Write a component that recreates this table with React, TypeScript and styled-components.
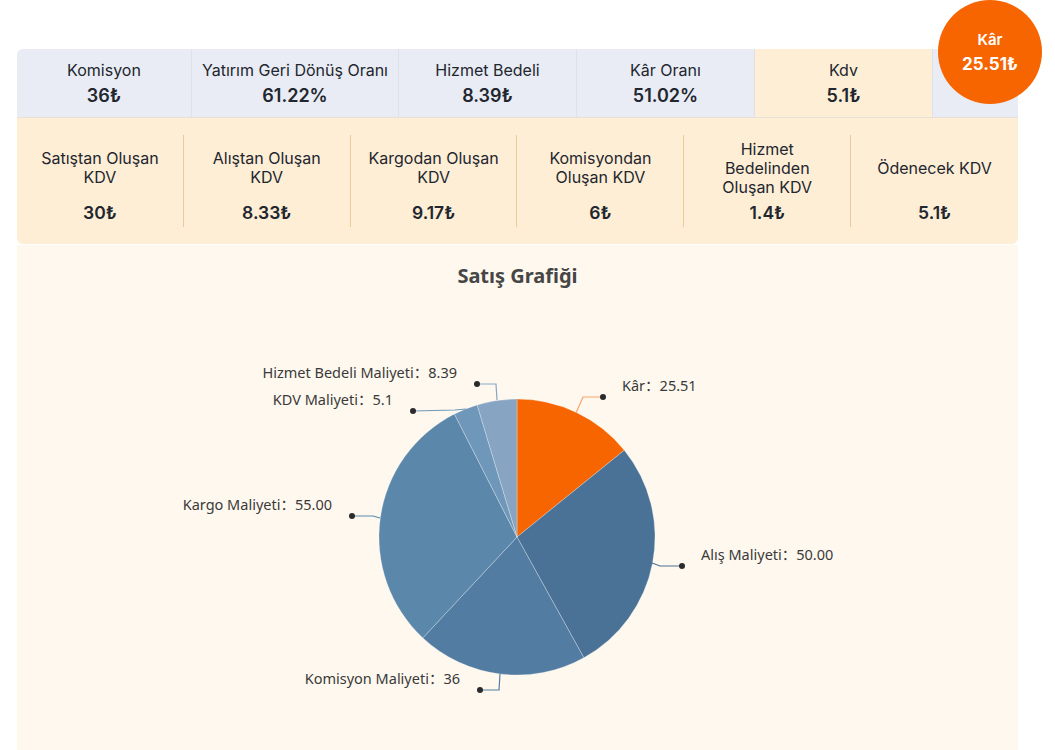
import React from 'react';
import styled, { createGlobalStyle } from 'styled-components';

const GlobalStyle = createGlobalStyle`
  html, body {
    margin: 0;
    padding: 0;
    background: #ffffff;
    font-family: Inter, "Noto Sans", sans-serif;
    color: #1f2430;
  }
`;

const Page = styled.div`
  position: relative;
  width: 1001px;
  padding: 49px 0 0 17px;
`;

const SummaryRow = styled.div`
  display: grid;
  grid-template-columns: 175px 207px 178px 178px 178px 85px;
  height: 68px;
  background: #e9ecf4;
  border-radius: 6px 6px 0 0;
  border-bottom: 1px solid #e6e2da;
  overflow: hidden;
`;

const SummaryCell = styled.div<{ $highlight?: boolean }>`
  display: flex;
  flex-direction: column;
  align-items: center;
  justify-content: center;
  gap: 5px;
  background: ${(p) => (p.$highlight ? '#ffeed6' : 'transparent')};
  border-right: 1px solid #dde1e8;
  &:last-child {
    border-right: none;
  }
`;

const SummaryLabel = styled.span`
  font-size: 16px;
  line-height: 19px;
  color: #22262e;
`;

const SummaryValue = styled.span`
  font-size: 18px;
  line-height: 21px;
  font-weight: 600;
  color: #22262e;
`;

const KdvRow = styled.div`
  display: grid;
  grid-template-columns: repeat(6, 1fr);
  background: #ffeed6;
  padding: 17px 0 17px;
  border-radius: 0 0 6px 6px;
`;

const KdvCell = styled.div`
  display: flex;
  flex-direction: column;
  align-items: center;
  height: 92px;
  padding: 0 17px;
  border-right: 1px solid #eccb98;
  &:last-child {
    border-right: none;
  }
`;

const KdvLabel = styled.div`
  display: flex;
  align-items: center;
  justify-content: center;
  height: 66px;
  font-size: 16px;
  line-height: 19px;
  text-align: center;
  color: #22262e;
`;

const KdvValue = styled.div`
  margin-top: 1px;
  font-size: 17.5px;
  font-weight: 600;
  color: #22262e;
`;

const ChartPanel = styled.div`
  margin-top: 1px;
  height: 520px;
  background: #fff8ee;
  display: flex;
  flex-direction: column;
  align-items: center;
`;

const ChartTitle = styled.h2`
  margin: 19px 0 0;
  height: 24px;
  font-family: "Noto Sans", "Open Sans", sans-serif;
  font-size: 20px;
  line-height: 24px;
  font-weight: 700;
  color: #464646;
`;

const Badge = styled.div`
  position: absolute;
  left: 938px;
  top: 0;
  width: 104px;
  height: 104px;
  border-radius: 50%;
  background: #f76500;
  color: #ffffff;
  display: flex;
  flex-direction: column;
  align-items: center;
  justify-content: center;
  gap: 5px;
`;

const BadgeLabel = styled.span`
  font-size: 15px;
  font-weight: 600;
  line-height: 18px;
`;

const BadgeValue = styled.span`
  font-size: 17px;
  font-weight: 700;
  line-height: 20px;
`;

const summary = [
  { label: 'Komisyon', value: '36₺' },
  { label: 'Yatırım Geri Dönüş Oranı', value: '61.22%' },
  { label: 'Hizmet Bedeli', value: '8.39₺' },
  { label: 'Kâr Oranı', value: '51.02%' },
  { label: 'Kdv', value: '5.1₺', highlight: true },
];

const kdvItems = [
  { label: 'Satıştan Oluşan KDV', value: '30₺' },
  { label: 'Alıştan Oluşan KDV', value: '8.33₺' },
  { label: 'Kargodan Oluşan KDV', value: '9.17₺' },
  { label: 'Komisyondan Oluşan KDV', value: '6₺' },
  { label: 'Hizmet Bedelinden Oluşan KDV', value: '1.4₺' },
  { label: 'Ödenecek KDV', value: '5.1₺' },
];

// page coords of the chart svg's top-left corner
const OX = 17;
const OY = 288;
const CX = 517 - OX;
const CY = 537 - OY;
const R = 138;

type Slice = {
  name: string;
  value: number;
  color: string;
  line: string;
  points: [number, number][];
  side: 'left' | 'right';
};

const slices: Slice[] = [
  { name: 'Kâr', value: 25.51, color: '#f76500', line: '#f7a46c', side: 'right', points: [[576, 413], [583, 397], [603, 397]] },
  { name: 'Alış Maliyeti', value: 50, color: '#4a7196', line: '#4a7196', side: 'right', points: [[652, 563], [660, 566], [682, 566]] },
  { name: 'Komisyon Maliyeti', value: 36, color: '#527ca1', line: '#527ca1', side: 'left', points: [[500, 674], [499, 690], [480, 690]] },
  { name: 'Kargo Maliyeti', value: 55, color: '#5b87ab', line: '#5b87ab', side: 'left', points: [[380, 518], [373, 516], [352, 516]] },
  { name: 'KDV Maliyeti', value: 5.1, color: '#6f97b9', line: '#6f97b9', side: 'left', points: [[466, 409], [455, 410], [413, 411]] },
  { name: 'Hizmet Bedeli Maliyeti', value: 8.39, color: '#87a5c3', line: '#87a5c3', side: 'left', points: [[497, 400], [496, 384], [477, 384]] },
];

const labelText = ['Kâr：25.51', 'Alış Maliyeti：50.00', 'Komisyon Maliyeti：36', 'Kargo Maliyeti：55.00', 'KDV Maliyeti：5.1', 'Hizmet Bedeli Maliyeti：8.39'];

const polar = (deg: number): [number, number] => {
  const rad = (deg * Math.PI) / 180;
  return [CX + R * Math.sin(rad), CY - R * Math.cos(rad)];
};

const arcPath = (a0: number, a1: number): string => {
  const [x0, y0] = polar(a0);
  const [x1, y1] = polar(a1);
  const large = a1 - a0 > 180 ? 1 : 0;
  return `M ${CX} ${CY} L ${x0} ${y0} A ${R} ${R} 0 ${large} 1 ${x1} ${y1} Z`;
};

const PieChart = (): JSX.Element => {
  const total = slices.reduce((s, d) => s + d.value, 0);
  let angle = 0;
  return (
    <svg width={1001} height={470} style={{ display: 'block' }}>
      {slices.map((s) => {
        const a0 = angle;
        const a1 = angle + (s.value / total) * 360;
        angle = a1;
        return <path key={s.name} d={arcPath(a0, a1)} fill={s.color} stroke="#ffffff" strokeOpacity={0.45} strokeWidth={0.6} />;
      })}
      {slices.map((s, i) => {
        const pts = s.points.map(([x, y]) => [x - OX, y - OY]);
        const end = pts[pts.length - 1];
        return (
          <g key={`l-${s.name}`}>
            <polyline points={pts.map((p) => p.join(',')).join(' ')} fill="none" stroke={s.line} strokeWidth={1.2} />
            <circle cx={end[0]} cy={end[1]} r={3} fill="#2b2b2b" />
            <text
              x={s.side === 'right' ? end[0] + 19 : end[0] - 20}
              y={end[1] - 10}
              textAnchor={s.side === 'right' ? 'start' : 'end'}
              dominantBaseline="middle"
              fontFamily={'"Noto Sans", "Noto Sans CJK SC", sans-serif'}
              fontSize={14.5}
              fill="#3a3a3a"
            >
              {labelText[i]}
            </text>
          </g>
        );
      })}
    </svg>
  );
};

const App = (): JSX.Element => (
  <Page>
    <GlobalStyle />
    <SummaryRow>
      {summary.map((s) => (
        <SummaryCell key={s.label} $highlight={s.highlight}>
          <SummaryLabel>{s.label}</SummaryLabel>
          <SummaryValue>{s.value}</SummaryValue>
        </SummaryCell>
      ))}
      <SummaryCell />
    </SummaryRow>
    <KdvRow>
      {kdvItems.map((k) => (
        <KdvCell key={k.label}>
          <KdvLabel>{k.label}</KdvLabel>
          <KdvValue>{k.value}</KdvValue>
        </KdvCell>
      ))}
    </KdvRow>
    <ChartPanel>
      <ChartTitle>Satış Grafiği</ChartTitle>
      <PieChart />
    </ChartPanel>
    <Badge>
      <BadgeLabel>Kâr</BadgeLabel>
      <BadgeValue>25.51₺</BadgeValue>
    </Badge>
  </Page>
);

export default App;
